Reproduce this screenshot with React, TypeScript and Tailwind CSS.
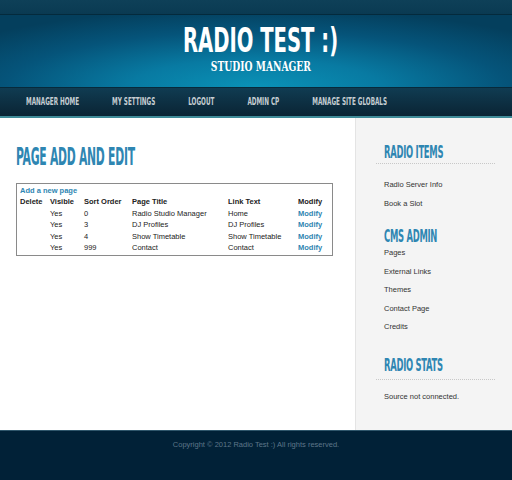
import React from "react";

const cond = "font-['DejaVu_Sans_Condensed','DejaVu_Sans',sans-serif] font-bold";
const body = "font-['Liberation_Sans',Arial,sans-serif]";

const navLinks = ["MANAGER HOME", "MY SETTINGS", "LOGOUT", "ADMIN CP", "MANAGE SITE GLOBALS"];

const pages = [
  { visible: "Yes", order: "0", title: "Radio Studio Manager", link: "Home" },
  { visible: "Yes", order: "3", title: "DJ Profiles", link: "DJ Profiles" },
  { visible: "Yes", order: "4", title: "Show Timetable", link: "Show Timetable" },
  { visible: "Yes", order: "999", title: "Contact", link: "Contact" },
];

function SideHeading({ children, line }: { children: React.ReactNode; line?: boolean }) {
  return (
    <div className={`h-[24px] pl-[8px] ${line ? "border-b border-dotted border-[#c8c8c8]" : ""}`}>
      <span className={`${cond} inline-block origin-left scale-x-[0.55] text-[17px] leading-[24px] tracking-[-0.5px] whitespace-nowrap text-[#2e86b2]`}>
        {children}
      </span>
    </div>
  );
}

export default function App() {
  return (
    <div className={`w-[512px] h-[480px] overflow-hidden bg-white ${body}`}>
      {/* top strip */}
      <div className="h-[15px] bg-gradient-to-b from-[#0e4058] to-[#0a3a52] border-b border-[#042a3c]" />

      {/* header */}
      <header className="h-[72px] pl-[10px] flex flex-col items-center bg-[radial-gradient(ellipse_70%_110%_at_50%_100%,#0a92b7_0%,#087aa2_35%,#05547a_70%,#043f5d_100%)]">
        <div className="h-[45px] pt-[10px] flex justify-center">
          <span className={`${cond} inline-block scale-x-[0.66] text-[33px] leading-[32px] text-white whitespace-nowrap`}>
            RADIO TEST :)
          </span>
        </div>
        <div className="font-['DejaVu_Serif_Condensed','DejaVu_Serif',serif] font-bold text-[12px] leading-[14px] text-white scale-x-[0.85]">
          STUDIO MANAGER
        </div>
      </header>

      {/* nav */}
      <nav className="h-[31px] bg-gradient-to-b from-[#103c52] to-[#0a2434] border-t border-[#072a3b] border-b-2 border-b-[#3f8b98] flex items-center pl-[26px]">
        <div className="flex items-center gap-[55px] origin-left scale-x-[0.6]">
          {navLinks.map((l) => (
            <span key={l} className={`${cond} text-[10.5px] text-[#c5cdd2] whitespace-nowrap`}>
              {l}
            </span>
          ))}
        </div>
      </nav>

      {/* main */}
      <div className="flex h-[312px]">
        <main className="w-[355px] pl-[16px] pt-[27px]">
          <h1 className="h-[32px]">
            <span className={`${cond} inline-block origin-left scale-x-[0.5] text-[24px] leading-[24px] tracking-[-0.5px] whitespace-nowrap text-[#2e86b2]`}>
              PAGE ADD AND EDIT
            </span>
          </h1>
          <div className="mt-[6px] w-[317px] border border-[#8a8a8a] pt-[1px] pb-[1px] text-[7.5px] text-[#222]">
            <div className="h-[11px] leading-[11px] pl-[3px] font-bold text-[#2e86b2]">Add a new page</div>
            <table className="w-full table-fixed border-collapse">
              <colgroup>
                <col className="w-[30px]" />
                <col className="w-[34px]" />
                <col className="w-[48px]" />
                <col className="w-[96px]" />
                <col className="w-[70px]" />
                <col />
              </colgroup>
              <thead>
                <tr className="h-[11.5px]">
                  <th className="pl-[3px] font-bold text-left">Delete</th>
                  <th className="pl-[3px] font-bold text-left">Visible</th>
                  <th className="pl-[3px] font-bold text-left">Sort Order</th>
                  <th className="pl-[3px] font-bold text-left">Page Title</th>
                  <th className="pl-[3px] font-bold text-left">Link Text</th>
                  <th className="pl-[3px] font-bold text-left">Modify</th>
                </tr>
              </thead>
              <tbody>
                {pages.map((p) => (
                  <tr key={p.title} className="h-[11.5px]">
                    <td className="pl-[3px]"></td>
                    <td className="pl-[3px]">{p.visible}</td>
                    <td className="pl-[3px]">{p.order}</td>
                    <td className="pl-[3px] whitespace-nowrap">{p.title}</td>
                    <td className="pl-[3px] whitespace-nowrap">{p.link}</td>
                    <td className="pl-[3px] font-bold text-[#2e86b2]">Modify</td>
                  </tr>
                ))}
              </tbody>
            </table>
          </div>
        </main>

        <aside className="flex-1 bg-[#f4f4f4] border-l border-[#e4e4e4] pt-[22px] text-[7.5px] text-[#333]">
          <div className="ml-[20px] w-[119px]">
            <SideHeading line>RADIO ITEMS</SideHeading>
            <ul className="mt-[11px] pl-[8px]">
              <li className="h-[19px] leading-[19px]">Radio Server Info</li>
              <li className="h-[19px] leading-[19px]">Book a Slot</li>
            </ul>

            <div className="mt-[11px]">
              <SideHeading>CMS ADMIN</SideHeading>
            </div>
            <ul className="-mt-[4px] pl-[8px]">
              <li className="h-[18.5px] leading-[18.5px]">Pages</li>
              <li className="h-[18.5px] leading-[18.5px]">External Links</li>
              <li className="h-[18.5px] leading-[18.5px]">Themes</li>
              <li className="h-[18.5px] leading-[18.5px]">Contact Page</li>
              <li className="h-[18.5px] leading-[18.5px]">Credits</li>
            </ul>

            <div className="mt-[16px]">
              <div className="pb-[2px] border-b border-dotted border-[#c8c8c8]">
                <SideHeading>RADIO STATS</SideHeading>
              </div>
            </div>
            <ul className="mt-[7px] pl-[8px]">
              <li className="h-[19px] leading-[19px]">Source not connected.</li>
            </ul>
          </div>
        </aside>
      </div>

      {/* footer */}
      <footer className="h-[50px] bg-[#012137] border-t border-[#2f566b] pt-[8px] text-center text-[7.5px] text-[#5d7689]">
        Copyright © 2012 Radio Test :) All rights reserved.
      </footer>
    </div>
  );
}
